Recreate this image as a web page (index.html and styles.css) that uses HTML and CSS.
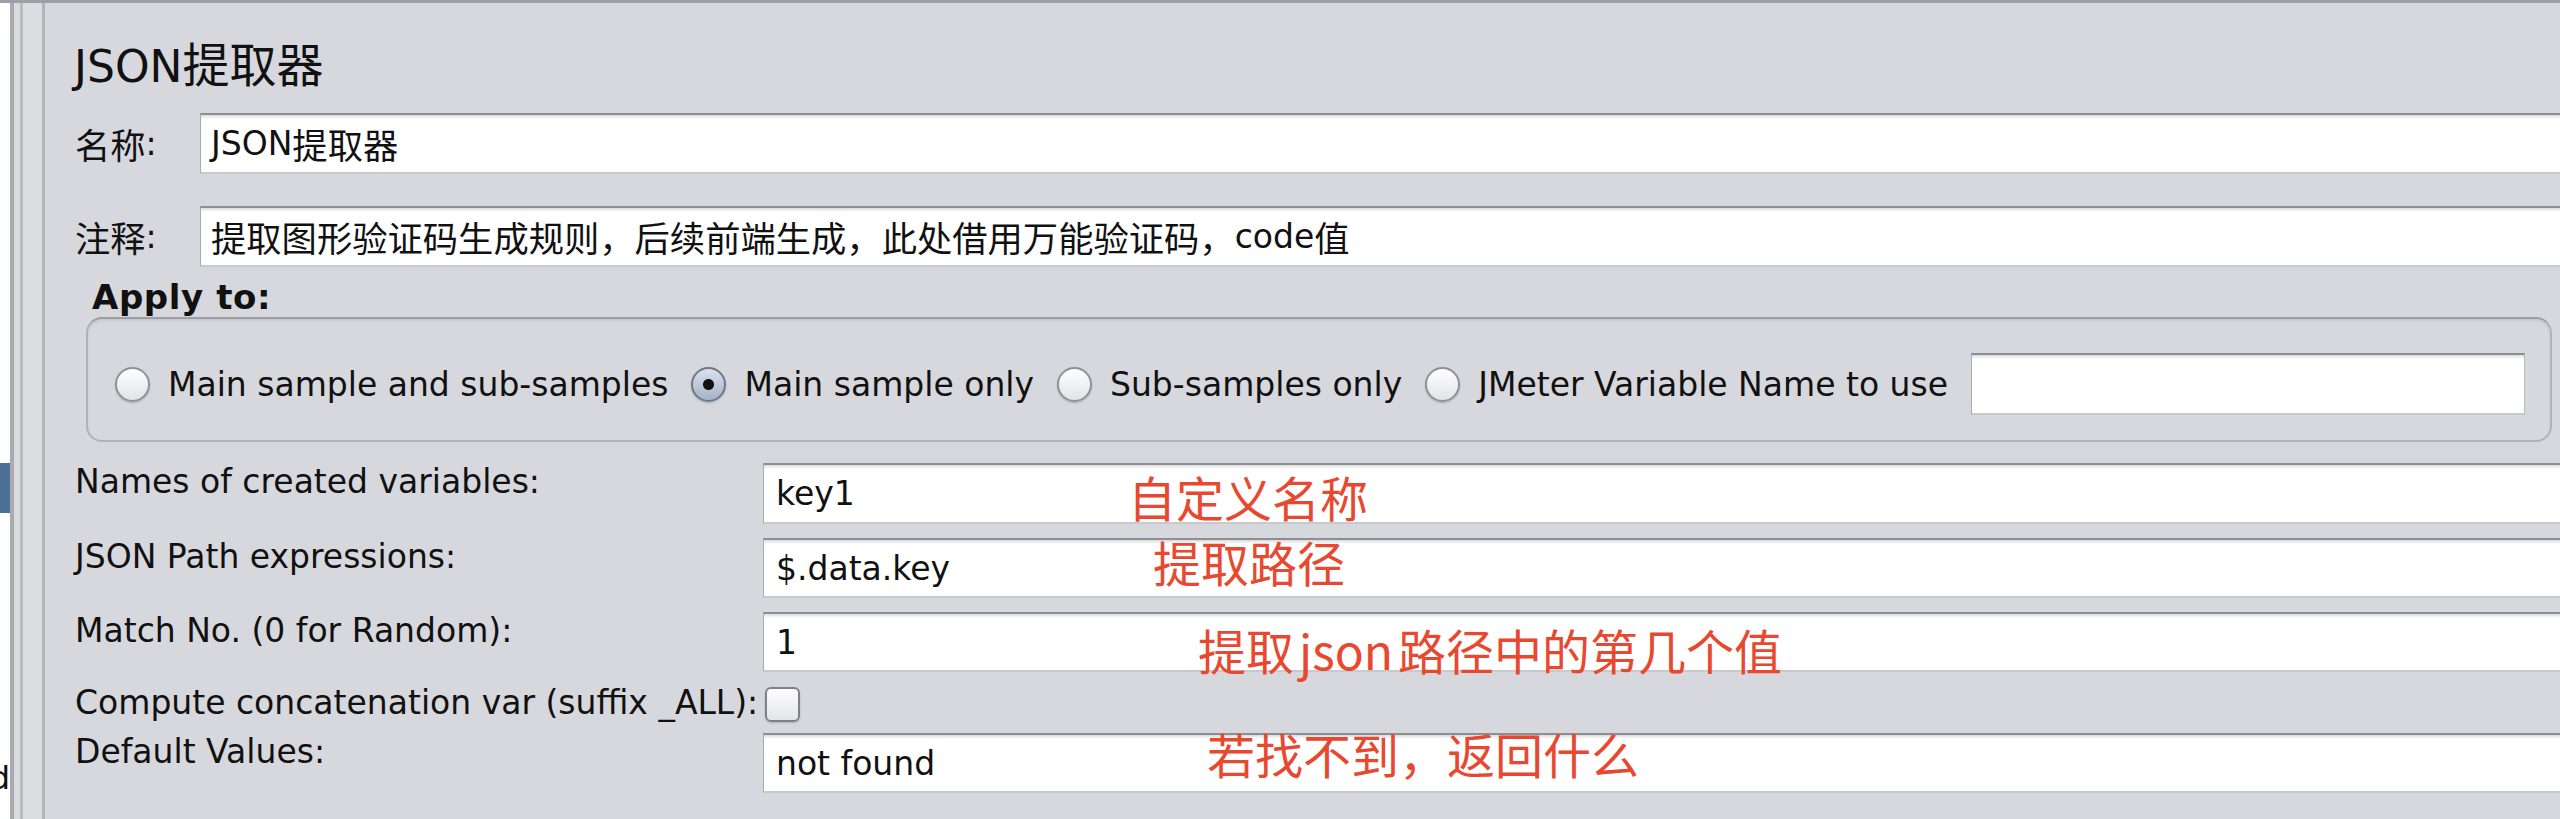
FILE: index.html
```html
<!DOCTYPE html>
<html lang="zh-CN">
<head>
<meta charset="utf-8">
<title>JSON提取器</title>
<link rel="stylesheet" href="styles.css">
</head>
<body>
<div class="app">
  <aside class="tree">
    <div class="tree-sel"></div>
    <div class="tree-text"><span>d</span></div>
  </aside>
  <div class="split"></div>
  <main class="editor">
    <h1 class="title">JSON<span class="zh">提取器</span></h1>

    <div class="field-row">
      <label class="field-label"><span class="zh">名称</span>:</label>
      <div class="text-input">JSON<span class="zh">提取器</span></div>
    </div>

    <div class="field-row comment-row">
      <label class="field-label"><span class="zh">注释</span>:</label>
      <div class="text-input"><span class="zh">提取图形验证码生成规则，后续前端生成，此处借用万能验证码，</span>code<span class="zh">值</span></div>
    </div>

    <div class="apply-label">Apply to:</div>
    <div class="apply-group">
      <span class="radio"></span><span class="radio-text">Main sample and sub-samples</span>
      <span class="radio on"></span><span class="radio-text">Main sample only</span>
      <span class="radio"></span><span class="radio-text">Sub-samples only</span>
      <span class="radio"></span><span class="radio-text">JMeter Variable Name to use</span>
      <div class="text-input var-input"></div>
    </div>

    <div class="props">
      <div class="prop-label">Names of created variables:</div>
      <div class="text-input prop-input">key1<span class="note note-1">自定义名称</span></div>

      <div class="prop-label">JSON Path expressions:</div>
      <div class="text-input prop-input">$.data.key<span class="note note-2">提取路径</span></div>

      <div class="prop-label">Match No. (0 for Random):</div>
      <div class="text-input prop-input">1<span class="note note-3">提取<span class="note-latin">json</span>路径中的第几个值</span></div>

      <div class="prop-label check-label">Compute concatenation var (suffix _ALL):</div>
      <div class="check-cell"><span class="check"></span></div>

      <div class="prop-label">Default Values:</div>
      <div class="text-input prop-input">not found<span class="note note-4">若找不到，返回什么</span></div>
    </div>
  </main>
</div>
</body>
</html>
```

FILE: styles.css
```css
* { box-sizing: border-box; }
html, body { margin: 0; padding: 0; }
body {
  width: 2560px;
  height: 819px;
  overflow: hidden;
  background: #d7d8dd;
  font-family: "DejaVu Sans", "Noto Sans CJK SC", sans-serif;
  font-size: 33px;
  color: #111;
}
.zh { font-family: "Noto Sans CJK SC", sans-serif; font-size: 1.07em; }

.app {
  display: flex;
  height: 819px;
  border-top: 3px solid #9ca0a8;
}

/* left tree (cut off) */
.tree {
  width: 10px;
  flex: none;
  background: #fff;
  display: flex;
  flex-direction: column;
  overflow: hidden;
}
.tree-sel {
  margin-top: 460px;
  height: 50px;
  background: #4e6f98;
}
.tree-text {
  margin-top: 247px;
  display: flex;
  justify-content: flex-end;
  line-height: 37px;
  font-size: 32px;
}

.split {
  width: 35px;
  flex: none;
  background: linear-gradient(to right,
    #a9abb0 0 4px, #dadbdf 4px 10px, #babcc0 10px 13px,
    #dcdde1 13px 32px, #b2b4b9 32px 35px);
}

/* editor */
.editor {
  flex: 1;
  min-width: 0;
  overflow: hidden;
  padding-left: 30px;
  display: flex;
  flex-direction: column;
}
.title {
  margin: 0 0 0 -1px;
  padding-top: 33px;
  height: 110px;
  font-size: 44px;
  font-weight: normal;
  line-height: 52px;
}

.text-input {
  background: #fff;
  border-top: 2px solid #8d8e93;
  border-bottom: 2px solid #c8c9cd;
  border-left: 1px solid #a9aaae;
  box-shadow: inset 0 4px 3px -2px rgba(0, 0, 0, 0.14);
  padding-left: 10px;
  display: flex;
  align-items: center;
  white-space: nowrap;
}

.field-row {
  display: flex;
  height: 61px;
  margin-right: -20px;
}
.comment-row { margin-top: 32px; }
.field-label {
  width: 125px;
  flex: none;
  display: flex;
  align-items: center;
}
.field-row .text-input { flex: 1; }

.apply-label {
  height: 50px;
  padding: 11px 0 0 17px;
  font-weight: bold;
  font-size: 34px;
  letter-spacing: 0.6px;
  line-height: 38px;
}

.apply-group {
  height: 125px;
  margin: 0 8px 0 11px;
  border: 2px solid #b0b2b7;
  border-top-color: #9c9ea4;
  border-radius: 16px;
  box-shadow: inset 0 2px 3px rgba(0, 0, 0, 0.08);
  padding: 9px 25px 0 27px;
  display: flex;
  align-items: center;
}
.radio {
  width: 35px;
  height: 35px;
  flex: none;
  border-radius: 50%;
  border: 2px solid #8f9196;
  background: linear-gradient(#ffffff, #e2e3e7);
  box-shadow: 0 1px 2px rgba(0, 0, 0, 0.2);
}
.radio.on {
  border-color: #6f7887;
  background:
    radial-gradient(circle, #111 0 5px, transparent 6px),
    linear-gradient(#d9e1ec, #a4b3c8);
}
.radio-text {
  margin: 0 23px 0 18px;
  white-space: nowrap;
}
.var-input {
  flex: 1;
  height: 62px;
  border-right: 1px solid #b9babe;
}

.props {
  margin: 21px -20px 0 0;
  display: grid;
  grid-template-columns: 688px 1fr;
  grid-template-rows: 61px 60px 60px 33px 60px;
  row-gap: 14px;
}
.prop-label {
  align-self: start;
  line-height: 37px;
  white-space: nowrap;
}
.check-label { align-self: center; }
.prop-input {
  position: relative;
  padding-left: 12px;
}
.check-cell { display: flex; align-items: flex-start; padding-left: 2px; }
.check {
  width: 35px;
  height: 35px;
  margin-top: 1px;
  border-radius: 6px;
  border: 2px solid #7f8186;
  background: linear-gradient(#fefefe, #e3e4e8);
  box-shadow: 0 1px 2px rgba(0, 0, 0, 0.18);
}

/* red annotations laid over the fields */
.note {
  position: absolute;
  font-family: "Noto Sans CJK SC", sans-serif;
  font-size: 48px;
  line-height: 48px;
  color: #e84830;
  white-space: nowrap;
}
.note-latin { margin: 0 5px; }
.note-1 { left: 364px; top: 7px; }
.note-2 { left: 389px; top: -3px; }
.note-3 { left: 434px; top: 11px; }
.note-4 { left: 443px; top: -6px; }
```
